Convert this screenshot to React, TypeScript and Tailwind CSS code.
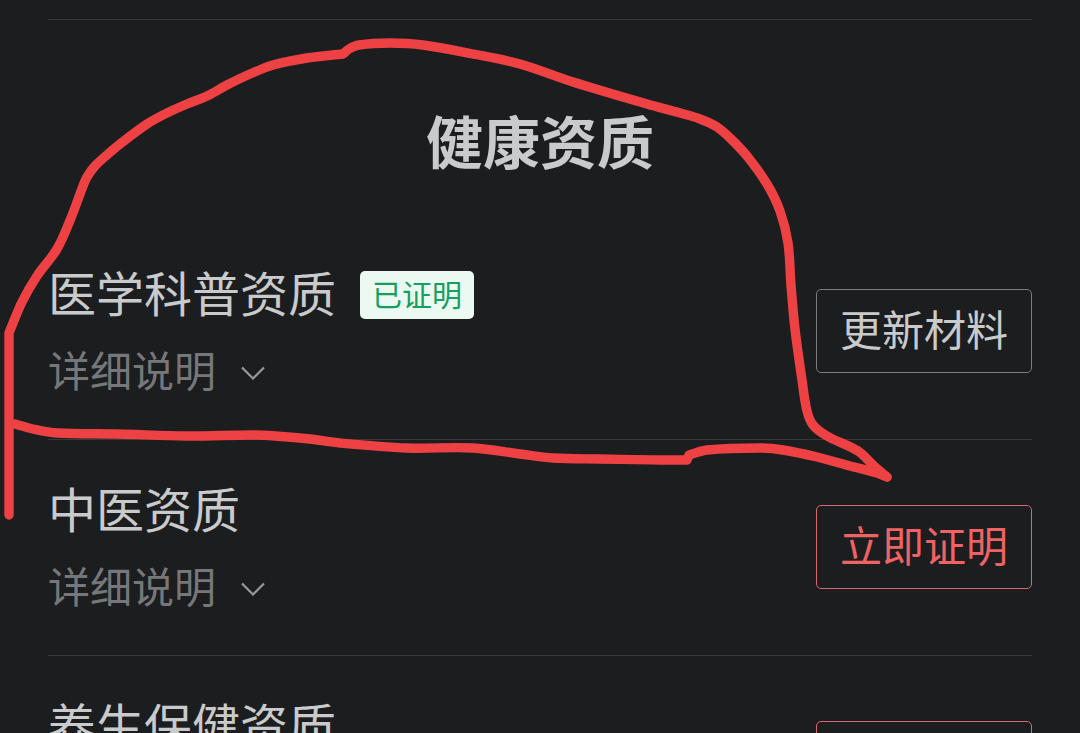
import React, { useState } from 'react';
import { clsx } from 'clsx';

interface Qualification {
  id: string;
  name: string;
  verified: boolean;
}

type Point = [number, number];

const qualifications: Qualification[] = [
  { id: 'science', name: '医学科普资质', verified: true },
  { id: 'tcm', name: '中医资质', verified: false },
  { id: 'wellness', name: '养生保健资质', verified: false },
];

// A repeated point makes a corner in the stroke
const outerStroke: Point[] = [
  [9, 515], [9, 333], [9, 333], [22, 302], [37, 276], [57, 249], [71, 218],
  [83, 186], [87, 177], [95, 166], [107, 155], [120, 144], [147, 124],
  [167, 113], [187, 104], [207, 96], [227, 85], [250, 74], [273, 65],
  [307, 58], [343, 54], [343, 54], [349, 49], [359, 45], [390, 43], [423, 45],
  [473, 54], [520, 64], [573, 82], [647, 104], [680, 113], [700, 119],
  [717, 127], [730, 138], [747, 156], [767, 184], [780, 211], [788, 243],
  [791, 285], [795, 329], [802, 380], [807, 411], [813, 425], [827, 436],
  [858, 451], [874, 466], [887, 477],
];

const lowerStroke: Point[] = [
  [887, 477], [877, 473], [850, 466], [817, 457], [783, 450], [760, 448],
  [707, 450], [689, 455], [689, 455], [687, 460], [687, 460], [660, 460],
  [600, 459], [553, 458], [520, 454], [473, 448], [407, 448], [340, 443],
  [310, 439], [275, 436], [253, 435], [187, 436], [117, 434], [57, 433],
  [33, 429], [15, 424],
];

// Catmull-Rom through the sampled pen points
function smoothPath(points: Point[]) {
  let d = `M${points[0][0]} ${points[0][1]}`;
  for (let i = 0; i < points.length - 1; i++) {
    const p0 = points[i - 1] ?? points[i];
    const p1 = points[i];
    const p2 = points[i + 1];
    const p3 = points[i + 2] ?? p2;
    // keep the handles short next to a much longer segment
    const len = Math.hypot(p2[0] - p1[0], p2[1] - p1[1]);
    const k1 = len / (Math.hypot(p2[0] - p0[0], p2[1] - p0[1]) || 1) / 3;
    const k2 = len / (Math.hypot(p3[0] - p1[0], p3[1] - p1[1]) || 1) / 3;
    d += `C${p1[0] + (p2[0] - p0[0]) * k1} ${p1[1] + (p2[1] - p0[1]) * k1} `;
    d += `${p2[0] - (p3[0] - p1[0]) * k2} ${p2[1] - (p3[1] - p1[1]) * k2} `;
    d += `${p2[0]} ${p2[1]}`;
  }
  return d;
}

function PenMarkup() {
  return (
    <svg
      className="absolute left-0 top-0 pointer-events-none"
      width="1080"
      height="540"
      viewBox="0 0 1080 540"
      fill="none"
      stroke="#ee4143"
      strokeWidth="9.4"
      strokeLinecap="round"
      strokeLinejoin="round"
      aria-hidden="true"
    >
      <path d={smoothPath(outerStroke)} />
      <path d={smoothPath(lowerStroke)} />
    </svg>
  );
}

function QualificationRow({ item }: { item: Qualification }) {
  const [expanded, setExpanded] = useState(false);

  return (
    <li className="flex items-center justify-between border-b border-[#37383a] pt-[35px] pb-9">
      <div>
        <div className="flex items-center gap-6">
          <h2 className="pb-2 text-5xl leading-[64px] text-[#c9cacc]">{item.name}</h2>
          {item.verified && (
            <span className="rounded-[5px] bg-[#ecf8f2] px-3 pb-1 text-3xl leading-[44px] text-[#16a05d]">
              已证明
            </span>
          )}
        </div>
        <button
          type="button"
          aria-expanded={expanded}
          onClick={() => setExpanded(!expanded)}
          className="mt-3 flex items-center gap-6 text-[42px] text-[#76777a]"
        >
          <span className="pb-2 leading-[52px]">详细说明</span>
          <svg
            className={clsx('h-[26px] w-[26px]', expanded && 'rotate-180')}
            viewBox="0 0 26 26"
            fill="none"
            stroke="#98999b"
            strokeWidth="2.2"
            aria-hidden="true"
          >
            <path d="M2 7.5L13 18.5L24 7.5" />
          </svg>
        </button>
      </div>
      <button
        type="button"
        className={clsx(
          'rounded-[5px] border px-[23px] pt-2 pb-3.5 text-[42px] leading-[60px]',
          item.verified
            ? 'border-[#7b7c7e] text-[#c9cacc]'
            : 'border-[#d9686a] text-[#f06364]'
        )}
      >
        {item.verified ? '更新材料' : '立即证明'}
      </button>
    </li>
  );
}

function App() {
  return (
    <div className="relative h-screen overflow-hidden bg-[#1c1d1f] px-12 pt-[19px] font-['Noto_Sans_CJK_SC',sans-serif]">
      <section className="border-t border-[#37383a]">
        <h1 className="pt-[75px] pb-[41px] text-center text-[57px] font-bold leading-[88px] text-[#c9cacc]">
          健康资质
        </h1>
        <ul>
          {qualifications.map((item) => (
            <QualificationRow key={item.id} item={item} />
          ))}
        </ul>
      </section>
      <PenMarkup />
    </div>
  );
}

export default App;
